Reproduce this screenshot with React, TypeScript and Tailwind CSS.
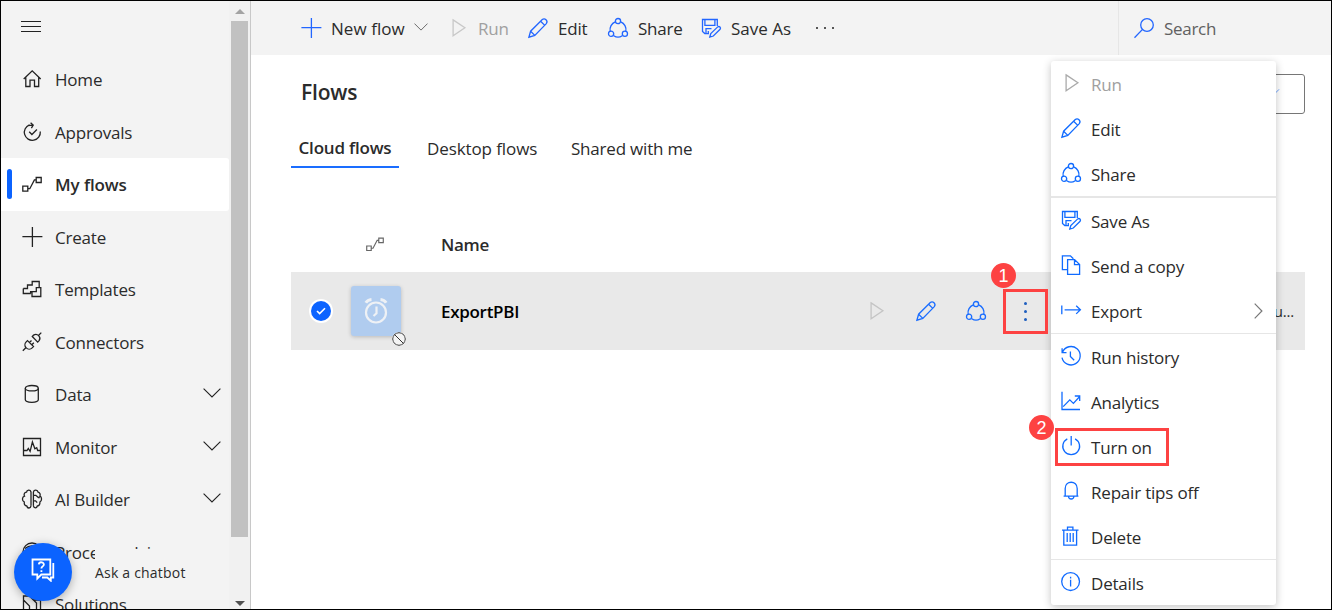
import type { ReactNode } from "react";

const paths: Record<string, ReactNode> = {
  home: <path d="M1.7 10 10.2 1.8 18.7 10M3.8 8.5V17.5H8V11.2H12.5V17.5H16.7V8.5" />,
  approvals: <><path d="M7.5 2.8A8 8 0 1 0 18.3 9.5M5.8 3.6 10.8 3.2M8.6.8l2.6 2.4-1.8 2.9" /><path d="m7.2 9.8 2.7 2.7 5-5" /></>,
  flow: <path d="M.8 12.2h5v5h-5zM14.2 3.5h5v5h-5zM5.8 14.7h2l4.6-8.8h1.8" />,
  plus: <path d="M10.4 0v20M.4 9.6h20" />,
  templates: <path d="M1.3 9.5h4.2V6h4.7V2.5h7v6M1.3 9.5v5h7.5M10 17.5h8.8V8.6h-4.5v4H10zM10 12.6H8.6v2" />,
  connectors: <path d="m.8 18.8 2.8-2.8M5.5 8.6l6 6-1.3 1.3a4.2 4.2 0 0 1-6-6zM7.5 10.5l2-2M9.8 12.8l2-2M10.3 4.5l5.4 5.6 1.4-1.4a4 4 0 0 0-5.5-5.6zM16.7 3.2 19.3.6" />,
  data: <><ellipse cx="9.8" cy="4.2" rx="6.5" ry="2.7" /><path d="M3.3 4.2v11.6c0 3.3 13 3.3 13 0V4.2" /></>,
  monitor: <path d="M1.5 1.5h17v17h-17zM1.7 13.5H5l1.3-2 1.8 2.8L10.4 5l2.5 6.8 1.8-1 1 2.7h2.5" />,
  brain: <path d="M9 16.8V3C8.3.2 4.8.5 4.5 3.2 2.2 3.4 1.6 5.8 2.5 7.2-.2 8.2-.2 12 2.3 13c-.4 2.6.8 3.9 2.5 4 .6 2.8 3.7 2.6 4.2-.2M11.4 3v13.8M11.4 3c.8-2.8 4.2-2.3 4.7.2 2 .5 2.5 2.4 1.8 4 2.2 1 2.2 4.8 0 5.8.2 2.2-.8 3.7-2.6 4-.6 2.6-3.4 2.4-3.9-.2M11.6 6.3h2.2l2.6 2.2h1.4M11.6 11.8h2l1.6 1.8" />,
  process: <><circle cx="10" cy="10" r="9" /><path d="M3 6.5c4-3.6 10-3.6 14 0" /></>,
  solutions: <path d="M1.5 2h6l4 4h7v13h-17zM1.5 6l6 6v7M11.5 6l3 3v10" />,
  play: <path d="m5.1 1.9 11.8 7.9-11.8 8z" />,
  pencil: <path d="M.9 19.2 2.6 13.2 14.3 1.6c2.5-2.1 6.1 1.4 4 4L6.8 17.4zM2.6 13.2l4.2 4.2M12.6 3.3l4.2 4.1" />,
  share: <><circle cx="10" cy="3.1" r="2.6" /><circle cx="3.1" cy="15.8" r="2.6" /><circle cx="16.9" cy="15.8" r="2.6" /><path d="M7.3 3.9A8.3 8.3 0 0 0 2.2 13.3M12.7 3.9a8.3 8.3 0 0 1 5.1 9.4M5.8 17.7c2.4 1.7 6 1.7 8.4 0" /></>,
  save: <path d="M8 15.6H3.8L1.5 13.5V1.5h14.8v6.5M3.9 1.5v5.8h10V1.5M5 15.6v-5h5.5M7.3 13v2.5M8.8 19l1-3.5 6.9-6.6c1.6-1.2 3.6.8 2.4 2.4L12.3 18z" />,
  copy: <path d="M6.6 14.6H1.4V.8h8l3 3M6.6 4.6h7l5 5v9.7h-12zM13.5 4.6v5h5" />,
  export: <path d="M.8 5.4v8.8M3.6 9.8h15.8M15.2 5.7l4.2 4.1-4.2 4.1" />,
  history: <><path d="M1.5 6.2A9.2 9.2 0 1 1 1 11.6M1.1 2.2v4.4h4.4" /><path d="M9.4 5.4v5l3.8 3.8" /></>,
  analytics: <path d="M1 .8v17.7h18M2.2 15.6l6.6-6.7 3.6 3.5 6.1-6.7M13.8 5h4.9v4.9" />,
  power: <path d="M10.2 0v9.6M6.3 2.8a8.4 8.4 0 1 0 7.8 0" />,
  bell: <path d="M2.6 15.2h14.8M4.2 15V7.4c0-8.2 12-8.2 12 0V15M7.5 15.5c.2 3.3 5.2 3.3 5.4 0" />,
  trash: <path d="M1 4.2h16.5M6.5 4V1.2h5.4V4M2.8 4.5v14.6h12.8V4.5M6.2 7v9M9.2 7v9M12.2 7v9" />,
  info: <><circle cx="9.6" cy="9.6" r="8.9" /><path d="M9.6 7.8v6.6M9.6 4.8v1.6" /></>,
  search: <><circle cx="13" cy="7" r="6.3" /><path d="M8.5 11.4.5 19.7" /></>,
};

function Icon({ name, className = "" }: { name: string; className?: string }) {
  return (
    <svg viewBox="0 0 20 20" className={`size-5 shrink-0 overflow-visible ${className}`} fill="none" stroke="currentColor" strokeWidth="1.3">
      {paths[name]}
    </svg>
  );
}

function Chevron({ className }: { className: string }) {
  return (
    <svg viewBox="0 0 18 10" className={className} fill="none" stroke="currentColor" strokeWidth="1.1">
      <path d="m.6.6 8.4 8.4L17.4.6" />
    </svg>
  );
}

const nav = [
  { icon: "home", label: "Home" },
  { icon: "approvals", label: "Approvals" },
  { icon: "flow", label: "My flows", active: true },
  { icon: "plus", label: "Create" },
  { icon: "templates", label: "Templates" },
  { icon: "connectors", label: "Connectors" },
  { icon: "data", label: "Data", more: true },
  { icon: "monitor", label: "Monitor", more: true },
  { icon: "brain", label: "AI Builder", more: true },
  { icon: "process", label: "Process advisor" },
  { icon: "solutions", label: "Solutions" },
];

function Sidebar() {
  return (
    <aside className="flex w-[250px] shrink-0 overflow-hidden border-r border-[#c8c8c8] bg-[#f3f3f3]">
      <div className="flex w-[228px] flex-col">
        <div className="flex h-[52px] shrink-0 flex-col gap-1 pl-5 pt-5">
          <span className="h-px w-5 bg-[#222]" />
          <span className="h-px w-5 bg-[#222]" />
          <span className="h-px w-5 bg-[#222]" />
        </div>
        {nav.map((n) => (
          <div
            key={n.label}
            className={`flex h-[52.5px] shrink-0 items-center ${n.active ? "rounded-r-[3px] bg-white font-[580] tracking-[-0.1px]" : ""}`}
          >
            <span className={`ml-1.5 h-[30px] w-[5px] rounded-full ${n.active ? "bg-[#0b63ff]" : ""}`} />
            <Icon name={n.icon} className="ml-2.5 text-[#222]" />
            <span className="ml-[13px] grow whitespace-nowrap pt-0.5">{n.label}</span>
            {n.more && <Chevron className="mr-2 h-2.5 w-[18px] -translate-y-px text-[#222]" />}
          </div>
        ))}
      </div>
      <div className="flex w-[21px] flex-col items-center bg-[#f1f1f1]">
        <svg viewBox="0 0 10 5" className="mt-2 mb-[7px] h-[5px] w-2.5 shrink-0"><path d="M0 5 5 0l5 5z" fill="#a3a3a3" /></svg>
        <div className="h-[516px] w-[17px] shrink-0 bg-[#c1c1c1]" />
        <svg viewBox="0 0 10 5" className="mt-16 h-[5px] w-2.5 shrink-0"><path d="M0 0h10L5 5z" fill="#505050" /></svg>
      </div>
    </aside>
  );
}

function Command({ icon, label, className = "" }: { icon: string; label: string; className?: string }) {
  return (
    <div className={`flex items-center gap-2.5 whitespace-nowrap ${className}`}>
      <Icon name={icon} className={icon === "play" ? "text-[#c8c8c8]" : "text-[#2266ff]"} />
      <span className="pt-0.5">{label}</span>
    </div>
  );
}

function Toolbar() {
  return (
    <header className="flex h-[54px] shrink-0 bg-[#f3f3f3] pl-[50px]">
      <Command icon="plus" label="New flow" className="w-[113px] tracking-[0.05px]" />
      <Chevron className="mt-[22px] h-2 w-3.5 text-[#555]" />
      <Command icon="play" label="Run" className="ml-5 w-[80px] text-[#a0a0a0]" />
      <Command icon="pencil" label="Edit" className="w-[80px]" />
      <Command icon="share" label="Share" className="w-[93px]" />
      <Command icon="save" label="Save As" className="w-[115px] tracking-[0px]" />
      <div className="flex items-center gap-[6px]">
        {[0, 1, 2].map((i) => <span key={i} className="size-[2px] bg-[#555]" />)}
      </div>
      <div className="ml-auto flex w-[213px] items-center gap-2.5 border-l border-[#e6e6e6] pl-[15px] tracking-[-0.3px] text-[#606060]">
        <Icon name="search" className="text-[#2266ff]" />
        <span className="pt-0.5">Search</span>
      </div>
    </header>
  );
}

function FlowRow() {
  return (
    <div className="flex h-[78px] items-center bg-[#e9e9e9]">
      <div className="ml-[18px] flex size-6 items-center justify-center rounded-full bg-white">
        <div className="flex size-5 items-center justify-center rounded-full bg-[#0b63ff]">
          <svg viewBox="0 0 12 10" className="h-2 w-2.5" fill="none" stroke="white" strokeWidth="2"><path d="m1 5 3.3 3.3L11 1.5" /></svg>
        </div>
      </div>
      <div className="relative ml-[18px] flex size-[50px] items-center justify-center rounded-[3px] bg-[#b0ccef] shadow-[0_1px_4px_rgba(0,0,0,0.2)]">
        <svg viewBox="0 0 24 26" className="h-[26px] w-6 overflow-visible" fill="none" stroke="#eef1f5" strokeWidth="2.2">
          <circle cx="12" cy="14.5" r="10" />
          <path d="M12.5 8.5v6.8L9.5 18" />
          <path strokeWidth="3" d="M1.8 4.8c1.3-2.1 3.3-3.2 5.7-3.4M22.2 4.8c-1.3-2.1-3.3-3.2-5.7-3.4" />
        </svg>
        <svg viewBox="0 0 14 14" className="absolute -right-[5px] -bottom-[10px] size-3.5 rounded-full bg-[#f4f4f4]" fill="none" stroke="#333" strokeWidth="1">
          <circle cx="7" cy="7" r="6.3" /><path d="m2.6 2.6 8.8 8.8" />
        </svg>
      </div>
      <span className="ml-10 w-[426px] pt-0.5 font-[580] tracking-[-0.3px] text-black">ExportPBI</span>
      <Icon name="play" className="ml-[-1px] text-[#c4c4c4]" />
      <Icon name="pencil" className="ml-[30px] text-[#1a6dff]" />
      <Icon name="share" className="ml-[30px] text-[#1a6dff]" />
      <div className="ml-[38px] flex flex-col gap-[5px]">
        {[0, 1, 2].map((i) => <span key={i} className="size-[3px] rounded-full bg-[#1f5fbf]" />)}
      </div>
      <span className="ml-auto mr-[11px] text-[15px]">u...</span>
    </div>
  );
}

const groups = [
  [["play", "Run"], ["pencil", "Edit"], ["share", "Share"]],
  [["save", "Save As"], ["copy", "Send a copy"], ["export", "Export"]],
  [["history", "Run history"], ["analytics", "Analytics"], ["power", "Turn on"], ["bell", "Repair tips off"], ["trash", "Delete"]],
  [["info", "Details"]],
];
const dividers = ["", "border-t-2", "border-t", "border-t"];

function ContextMenu() {
  return (
    <div className="absolute top-[60px] left-[1050px] w-[225px] rounded-[3px] bg-white shadow-[0_2px_8px_rgba(0,0,0,0.24)]">
      {groups.map((g, i) => (
        <div key={i} className={`border-[#e6e6e6] ${dividers[i]}`}>
          {g.map(([icon, label]) => (
            <div key={label} className={`flex h-[45px] items-center gap-2.5 pl-2.5 ${icon === "play" ? "text-[#a0a0a0]" : ""}`}>
              <Icon name={icon} className={`-translate-y-px ${icon === "play" ? "text-[#aaa]" : "text-[#106bff]"}`} />
              <span className="grow whitespace-nowrap pt-0.5">{label}</span>
              {icon === "export" && (
                <svg viewBox="0 0 9 16" className="mr-[13px] h-4 w-[9px]" fill="none" stroke="#777" strokeWidth="1.2"><path d="m.7.7 7.2 7.3L.7 15.3" /></svg>
              )}
            </div>
          ))}
        </div>
      ))}
    </div>
  );
}

function Badge({ n, className }: { n: number; className: string }) {
  return (
    <div className={`absolute flex size-[25px] items-center justify-center rounded-full bg-[#fd4242] font-['Liberation_Sans'] text-[18px] tracking-normal text-white ${className}`}>{n}</div>
  );
}

export default function App() {
  return (
    <div className="relative flex h-[610px] w-[1332px] overflow-hidden border border-black bg-white font-['Open_Sans',sans-serif] text-[17px] font-[365] leading-6 tracking-[-0.2px] text-[#2b2b2b]">
      <Sidebar />
      <div className="flex grow flex-col">
        <Toolbar />
        <main className="flex flex-col pr-[26px] pl-10">
          <div className="mt-[19px] flex h-[41px] justify-between">
            <h1 className="ml-2.5 pt-1 text-[21px] font-[580] leading-7 tracking-[-0.2px]">Flows</h1>
            <div className="flex h-10 w-[130px] items-center justify-end rounded-[3px] border border-[#767676] pr-[24px]">
              <Chevron className="h-1.5 w-3 -translate-y-0.5 text-[#1a6dff]" />
            </div>
          </div>
          <nav className="mt-[14px] flex h-[39px] whitespace-nowrap leading-[39px]">
            <span className="h-[39px] w-[108px] border-b-2 border-[#1a6dff] text-center font-[580] leading-[38px] tracking-[-0.2px]">Cloud flows</span>
            <span className="ml-7 w-36 tracking-[-0.1px]">Desktop flows</span>
            <span>Shared with me</span>
          </nav>
          <div className="mt-[50px] flex h-[54px] items-center font-[580]">
            <Icon name="flow" className="ml-[75px] size-[18px]! -translate-y-px text-[#666]" />
            <span className="ml-[57px] tracking-[-0.3px]">Name</span>
          </div>
          <FlowRow />
        </main>
      </div>
      <ContextMenu />
      <div className="absolute top-[288px] left-[1002px] size-[45px] border-3 border-[#fd4242]" />
      <Badge n={1} className="top-[262px] left-[990px]" />
      <div className="absolute top-[427px] left-[1054px] h-[38px] w-[114px] border-3 border-[#fd4242]" />
      <Badge n={2} className="top-[414px] left-[1028px]" />
      <div className="absolute top-[548px] left-[94px] flex h-[48px] w-[134px] items-center bg-[#f3f3f3] text-[14px] tracking-[0.2px]">Ask a chatbot</div>
      <div className="absolute top-[542px] left-[13px] flex size-[58px] items-center justify-center rounded-full bg-[#0b63ff] shadow-[0_2px_10px_rgba(0,0,0,0.3)]">
        <svg viewBox="0 0 24 24" className="size-6 -translate-y-0.5" fill="none" stroke="white" strokeWidth="1.8">
          <path d="M1.5 1.5h17.8v15h-9l-4 4v-4H1.5zM22.3 5v14.5h-2.5v3.2l-3.5-3.2H11M7.8 6.3c.5-3 5.5-2.5 5 .5-.3 1.7-2.4 1.7-2.4 3.8M10.4 12.2v1.9" />
        </svg>
      </div>
    </div>
  );
}
